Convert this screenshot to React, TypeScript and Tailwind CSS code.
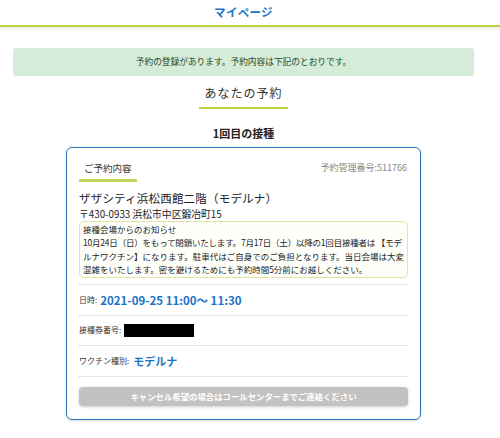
const jp = "font-['Noto_Sans_CJK_JP','Noto_Sans',sans-serif]";

function Row({ label, children }: { label: string; children: React.ReactNode }) {
  return (
    <div className="flex items-center h-[30.5px] border-b border-dotted border-[#cfcfcf]">
      <span className="text-[8px] text-[#333] mr-[3px]">{label}</span>
      {children}
    </div>
  );
}

export default function App() {
  return (
    <div className={`${jp} bg-white w-[500px] h-[438px] overflow-hidden text-[#222]`}>
      <header className="h-[27px] border-b-2 border-[#bccf3e] shadow-[0_2px_4px_rgba(0,0,0,0.08)]">
        <div className="w-[487px] text-center pt-[3px] text-[11.5px] font-bold text-[#1b74c5] leading-[18px] tracking-[0.3px]">
          マイページ
        </div>
      </header>

      <main className="w-[487px] px-[13px] pt-[21px]">
        <div className="bg-[#d4ecd8] rounded-[3px] h-[28px] flex items-center justify-center text-[8.7px] text-[#264b2c]">
          予約の登録があります。予約内容は下記のとおりです。
        </div>

        <div className="flex justify-center mt-[8px]">
          <h2 className="text-[12px] text-[#333] leading-[18px] px-[5px] pb-[5px] border-b-2 border-[#bccf3e] tracking-[1px]">
            あなたの予約
          </h2>
        </div>

        <h3 className="text-center text-[11px] font-bold text-[#222] mt-[16px] leading-[16px]">1回目の接種</h3>

        <section className="mx-auto mt-[6px] w-[355px] border-[1.5px] border-[#2a74b8] rounded-[6px] px-[12px] pt-[13px] pb-[13px] shadow-[0_1px_3px_rgba(0,0,0,0.15)]">
          <div className="flex justify-between items-start">
            <div className="text-[9.5px] text-[#333] px-[5px] pb-[4px] border-b-[3px] border-[#c5d455] leading-[14px]">
              ご予約内容
            </div>
            <div className="text-[9px] text-[#888] leading-[14px] mr-[1px]">予約管理番号:511766</div>
          </div>

          <div className="text-[11.5px] text-[#222] mt-[7px] leading-[18px] tracking-[0.2px]">
            ザザシティ浜松西館二階（モデルナ）
          </div>
          <div className="text-[9.8px] text-[#222] leading-[13px] mt-[1px]">〒430-0933 浜松市中区鍛冶町15</div>

          <div className="border border-[#e3e3a8] bg-[#fffffa] rounded-[5px] px-[3px] py-[1px] text-[8.5px] leading-[13.3px] text-[#222] whitespace-nowrap">
            接種会場からのお知らせ
            <br />
            <span className="tracking-[-0.2px]">
              10月24日（日）をもって閉鎖いたします。7月17日（土）以降の1回目接種者は 【モデ
            </span>
            <br />
            ルナワクチン】になります。駐車代はご自身でのご負担となります。当日会場は大変
            <br />
            混雑をいたします。密を避けるためにも予約時間5分前にお越しください。
          </div>

          <div className="border-b border-dotted border-[#cfcfcf] h-[7px]" />
          <Row label="日時:">
            <span className="text-[11.5px] font-bold text-[#1b74c5] leading-[18px]">2021-09-25 11:00～ 11:30</span>
          </Row>
          <Row label="接種券番号:">
            <span className="inline-block w-[70px] h-[13px] bg-black" />
          </Row>
          <Row label="ワクチン種別:">
            <span className="text-[11px] font-bold text-[#1b74c5] leading-[18px] ml-[1px]">モデルナ</span>
          </Row>

          <button className="mt-[10px] w-full h-[19px] rounded-[4px] bg-[#c2c2c2] text-white text-[8.4px] font-bold shadow-[0_1px_3px_rgba(0,0,0,0.2)]">
            キャンセル希望の場合はコールセンターまでご連絡ください
          </button>
        </section>
      </main>
    </div>
  );
}
